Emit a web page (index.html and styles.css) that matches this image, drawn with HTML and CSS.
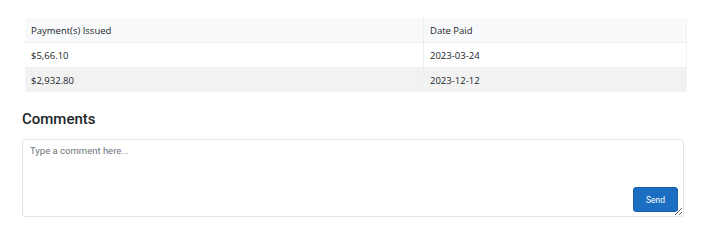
FILE: index.html
```html
<!DOCTYPE html>
<html lang="en">
<head>
<meta charset="utf-8">
<title>Payments</title>
<link rel="stylesheet" href="styles.css">
</head>
<body>
<main class="page">
  <table class="payments">
    <thead>
      <tr><th class="col-amount">Payment(s) Issued</th><th>Date Paid</th></tr>
    </thead>
    <tbody>
      <tr><td>$5,66.10</td><td>2023-03-24</td></tr>
      <tr class="alt"><td>$2,932.80</td><td>2023-12-12</td></tr>
    </tbody>
  </table>

  <section class="comments">
    <h3 class="comments-title">Comments</h3>
    <div class="comment-box">
      <textarea class="comment-input" placeholder="Type a comment here..."></textarea>
      <button class="btn-send" type="button">Send</button>
    </div>
  </section>
</main>
</body>
</html>
```

FILE: styles.css
```css
html, body {
  margin: 0;
  background: #fff;
}

.page {
  display: flex;
  flex-direction: column;
  padding: 18px 23px 0 22px;
}

.payments {
  margin-left: 3px;
  width: 662px;
  border-collapse: collapse;
  font-family: "Open Sans", "Liberation Sans", sans-serif;
  font-size: 9.5px;
  color: #212529;
}

.payments th,
.payments td {
  text-align: left;
  font-weight: 400;
  padding: 0 6px;
  height: 24px;
  border-bottom: 1px solid #eceef0;
}

.payments th {
  background: #f8f9fa;
}

.payments th:first-child,
.payments td:first-child {
  border-right: 1px solid #eceef0;
}

.payments tr > :last-child {
  border-right: 1px solid #f1f2f3;
}

.col-amount {
  width: 386px;
}

.payments tr.alt td {
  background: #f2f2f2;
  border-bottom: none;
}

.comments {
  display: flex;
  flex-direction: column;
}

.comments-title {
  margin: 18px 0 0;
  font-family: Roboto, "Liberation Sans", sans-serif;
  font-weight: 500;
  font-size: 15px;
  line-height: 18px;
  color: #212529;
}

.comment-box {
  position: relative;
  margin-top: 11px;
  width: 662px;
}

.comment-input {
  display: block;
  box-sizing: border-box;
  width: 662px;
  height: 78px;
  margin: 0;
  padding: 5px 7px;
  border: 1px solid #e3e6e9;
  border-radius: 3px;
  font-family: Roboto, "Liberation Sans", sans-serif;
  font-size: 9.5px;
  line-height: 12px;
  color: #212529;
  resize: vertical;
}

.comment-input::placeholder {
  color: #6c757d;
}

.btn-send {
  position: absolute;
  right: 6px;
  bottom: 5px;
  width: 45px;
  height: 25px;
  padding: 0;
  border: 1px solid #1861ac;
  border-radius: 3px;
  background: #1b6ec2;
  color: #fff;
  font-family: Roboto, "Liberation Sans", sans-serif;
  font-size: 8.5px;
  cursor: pointer;
}
```
